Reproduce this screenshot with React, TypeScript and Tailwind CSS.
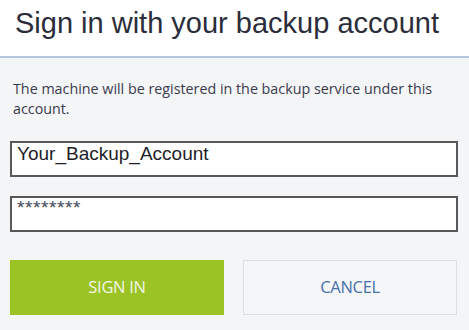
export default function App() {
  return (
    <div className="w-[469px] h-[330px] bg-[#f4f5f7] overflow-hidden flex flex-col">
      <div className="h-[58px] bg-white border-b-2 border-[#b3c7e0] pl-[15px] pt-[4px] shrink-0">
        <h1 className="text-[29px] leading-[38px] text-[#2b2d3b] font-['Liberation_Sans',Arial,sans-serif]">
          Sign in with your backup account
        </h1>
      </div>
      <div className="px-[10px] flex flex-col">
        <p className="mt-[21px] pl-[3px] pr-[6px] text-[14.3px] leading-[20px] text-[#3b3a4e] font-['Open_Sans',sans-serif]">
          The machine will be registered in the backup service under this account.
        </p>
        <div className="mt-[22px] h-[36px] w-[448px] bg-white border-2 border-[#585858] pl-[5px] text-[19px] leading-[22px] text-[#1e1e28] font-['Liberation_Sans',Arial,sans-serif]">
          Your_Backup_Account
        </div>
        <div className="mt-[19px] h-[36px] w-[448px] bg-white border-2 border-[#585858] pl-[5px] pt-[3px] text-[19px] leading-[14px] text-[#3f4658] font-['Liberation_Sans',Arial,sans-serif] tracking-[0.6px]">
          ********
        </div>
        <div className="mt-[28px] flex gap-[19px]">
          <button className="w-[214px] h-[55px] bg-[#9cc326] text-[#f2f6e6] text-[16.5px] font-['Open_Sans',sans-serif] tracking-[-0.3px]">
            SIGN IN
          </button>
          <button className="w-[214px] h-[55px] bg-[#f5f6f8] border border-[#dcdee2] text-[#4670a8] text-[16.5px] font-['Open_Sans',sans-serif] tracking-[-0.3px]">
            CANCEL
          </button>
        </div>
      </div>
    </div>
  );
}
